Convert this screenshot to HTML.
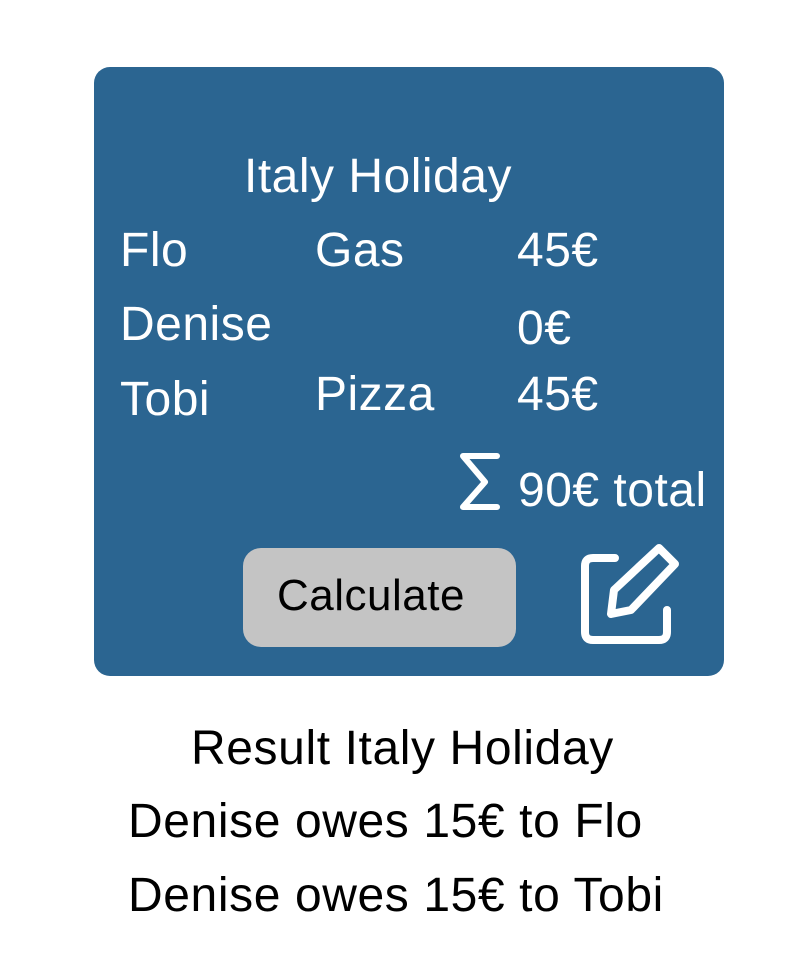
<!DOCTYPE html>
<html><head><meta charset="utf-8"><style>
html,body{margin:0;padding:0;background:#fff;width:808px;height:975px;overflow:hidden}
body{position:relative;font-family:"Liberation Sans",sans-serif}
.card{position:absolute;left:94px;top:67px;width:630px;height:609px;background:#2b6591;border-radius:16px}
.t{position:absolute;line-height:1;white-space:nowrap;font-size:48px;color:#fff;letter-spacing:0.5px}
.k{color:#000;letter-spacing:0.6px}
.btn{position:absolute;left:243px;top:548px;width:273px;height:99px;background:#c4c4c4;border-radius:18px}
</style></head><body>
<div class="card"></div>
<div class="t" style="left:244px;top:153px">Italy Holiday</div>
<div class="t" style="left:120px;top:227px">Flo</div>
<div class="t" style="left:315px;top:227px">Gas</div>
<div class="t" style="left:517px;top:227px">45€</div>
<div class="t" style="left:120px;top:301px">Denise</div>
<div class="t" style="left:517px;top:305px">0€</div>
<div class="t" style="left:120px;top:376px">Tobi</div>
<div class="t" style="left:315px;top:371px">Pizza</div>
<div class="t" style="left:517px;top:371px">45€</div>
<div class="t" style="left:518px;top:467px">90€ total</div>
<svg style="position:absolute;left:455px;top:450px" width="50" height="64" viewBox="0 0 50 64"><path d="M42 6H8L30 32L8 57H42" fill="none" stroke="#fff" stroke-width="6" stroke-linecap="round" stroke-linejoin="round"/></svg>
<div class="btn"></div>
<div class="t k" style="left:277px;top:574px;font-size:44px;letter-spacing:0.5px">Calculate</div>
<svg style="position:absolute;left:575px;top:540px" width="110" height="110" viewBox="0 0 110 110"><path d="M40 18H18Q10 18 10 26V92Q10 100 18 100H84Q92 100 92 92V70" fill="none" stroke="#fff" stroke-width="8" stroke-linecap="round" stroke-linejoin="round"/><path d="M36 74L39 50L84 8L100 24L56 70Z" fill="none" stroke="#fff" stroke-width="8" stroke-linejoin="round"/></svg>
<div class="t k" style="left:191px;top:725px">Result Italy Holiday</div>
<div class="t k" style="left:128px;top:798px">Denise owes 15€ to Flo</div>
<div class="t k" style="left:128px;top:872px">Denise owes 15€ to Tobi</div>
</body></html>
